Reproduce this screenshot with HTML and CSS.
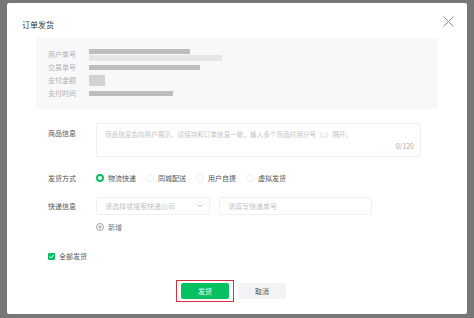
FILE: index.html
```html
<!DOCTYPE html>
<html lang="zh-CN">
<head>
    <meta charset="UTF-8">
    <meta name="viewport" content="width=device-width, initial-scale=1.0">
    <title>订单发货</title>
    <link rel="stylesheet" href="styles.css">
</head>
<body>
    <div class="modal">
        <div class="modal-head">
            <span class="modal-title">订单发货</span>
            <svg class="close" width="11" height="11" viewBox="0 0 11 11">
                <path d="M0.5 0.5L10.5 10.5M10.5 0.5L0.5 10.5" stroke="#8a8a8a" stroke-width="1" fill="none"/>
            </svg>
        </div>

        <div class="info">
            <div class="info-row">
                <span class="info-label">商户单号</span>
                <span class="mask">
                    <span class="bar" style="width:101px"></span>
                    <span class="bar light" style="width:133px"></span>
                </span>
            </div>
            <div class="info-row">
                <span class="info-label">交易单号</span>
                <span class="bar" style="width:111px"></span>
            </div>
            <div class="info-row">
                <span class="info-label">支付金额</span>
                <span class="bar tall" style="width:16px"></span>
            </div>
            <div class="info-row">
                <span class="info-label">支付时间</span>
                <span class="bar" style="width:84px"></span>
            </div>
        </div>

        <div class="form-row goods">
            <span class="form-label">商品信息</span>
            <div class="textarea">
                <span class="placeholder">商品信息会向用户展示。请保持和订单信息一致，输入多个商品时用分号（；）隔开。</span>
                <span class="counter">0/120</span>
            </div>
        </div>

        <div class="form-row method">
            <span class="form-label">发货方式</span>
            <div class="radios">
                <span class="radio checked"><i></i>物流快递</span>
                <span class="radio"><i></i>同城配送</span>
                <span class="radio"><i></i>用户自提</span>
                <span class="radio"><i></i>虚拟发货</span>
            </div>
        </div>

        <div class="form-row express">
            <span class="form-label">快递信息</span>
            <div class="select">
                <span class="placeholder">请选择或搜索快递公司</span>
                <svg width="6" height="4" viewBox="0 0 6 4"><path d="M0.5 0.5L3 3L5.5 0.5" stroke="#c4c4c4" fill="none"/></svg>
            </div>
            <div class="input"><span class="placeholder">请填写快递单号</span></div>
        </div>

        <div class="add">
            <svg width="8" height="8" viewBox="0 0 8 8">
                <circle cx="4" cy="4" r="3.5" stroke="#8c8c8c" stroke-width="0.8" fill="none"/>
                <path d="M4 2.2V5.8M2.2 4H5.8" stroke="#8c8c8c" stroke-width="0.8"/>
            </svg>
            <span>新增</span>
        </div>

        <div class="check-row">
            <span class="checkbox">
                <svg width="7" height="7" viewBox="0 0 7 7"><path d="M1.5 3.6L3 5L5.6 2" stroke="#fff" stroke-width="1" fill="none"/></svg>
            </span>
            <span>全部发货</span>
        </div>

        <div class="footer">
            <span class="mark"><button class="btn primary">发货</button></span>
            <button class="btn">取消</button>
        </div>
    </div>
</body>
</html>
```

FILE: styles.css
```css
*{
    box-sizing: border-box;
}
body{
    margin: 0;
    height: 318px;
    padding: 3px 7px 4px 7px;
    background-color: #777777;
    font-family: "Noto Sans CJK SC", "Noto Sans", sans-serif;
    font-size: 7px;
    color: #555;
}
.modal{
    height: 311px;
    background-color: #fff;
    border-radius: 2px;
    padding: 17px 29px 0 29px;
}
.modal-head{
    display: flex;
    justify-content: space-between;
    align-items: center;
    margin: 0 -15px 0 -14px;
    height: 10px;
}
.modal-title{
    font-size: 8px;
    line-height: 10px;
    color: #333;
}
.close{
    margin-top: -8px;
    margin-right: -1px;
}
.info{
    margin-top: 8px;
    height: 71px;
    background-color: #f7f8fa;
    padding: 10px 12px;
}
.info-row{
    display: flex;
    align-items: center;
    height: 13px;
}
.info-label{
    width: 41px;
    color: #b2b2b2;
    line-height: 13px;
}
.mask{
    display: flex;
    flex-direction: column;
    gap: 1px;
}
.bar{
    display: block;
    height: 5px;
    background-color: #bdbdbd;
    filter: blur(0.6px);
}
.bar.light{
    background-color: #e6e6e6;
    height: 6px;
}
.bar.tall{
    height: 11px;
    background-color: #d2d2d2;
}
.form-row{
    display: flex;
    align-items: center;
}
.form-label{
    width: 60px;
    padding-left: 12px;
    color: #555;
    flex-shrink: 0;
}
.goods{
    margin-top: 14px;
    align-items: flex-start;
}
.goods .form-label{
    padding-top: 5px;
}
.textarea{
    position: relative;
    width: 325px;
    height: 34px;
    border: 1px solid #f0f0f0;
    border-radius: 2px;
    padding: 5px 8px;
}
.placeholder{
    color: #c4c4c4;
    white-space: nowrap;
}
.textarea .placeholder{
    font-size: 6.6px;
}
.counter{
    position: absolute;
    right: 6px;
    bottom: 5px;
    color: #aaa;
}
.method{
    margin-top: 14px;
    height: 14px;
}
.radios{
    display: flex;
}
.radio{
    display: flex;
    align-items: center;
    width: 50px;
    gap: 4px;
    color: #555;
}
.radio i{
    display: block;
    width: 8px;
    height: 8px;
    border-radius: 50%;
    border: 1px solid #f0f0f0;
}
.radio.checked i{
    border: 2.5px solid #07c160;
}
.express{
    margin-top: 12px;
}
.select, .input{
    display: flex;
    align-items: center;
    height: 18px;
    border: 1px solid #f0f0f0;
    border-radius: 2px;
    padding: 0 6px 0 8px;
}
.select{
    width: 114px;
    justify-content: space-between;
}
.input{
    width: 153px;
    margin-left: 9px;
}
.add{
    display: flex;
    align-items: center;
    gap: 4px;
    margin: 7px 0 0 60px;
    height: 10px;
    color: #777;
}
.check-row{
    display: flex;
    align-items: center;
    gap: 4px;
    margin: 19px 0 0 12px;
    height: 10px;
    color: #555;
}
.checkbox{
    display: flex;
    align-items: center;
    justify-content: center;
    width: 7px;
    height: 7px;
    border-radius: 1px;
    background-color: #07c160;
}
.footer{
    display: flex;
    align-items: center;
    gap: 4px;
    margin-top: 19px;
    padding-left: 140px;
}
.mark{
    display: block;
    border: 1px solid #d3333d;
    padding: 2px 4px;
}
.btn{
    display: block;
    width: 48px;
    height: 16px;
    border: none;
    border-radius: 2px;
    background-color: #f2f3f5;
    font-family: inherit;
    font-size: 7px;
    color: #555;
    padding: 0;
}
.btn.primary{
    background-color: #07c160;
    color: #fff;
}
```
